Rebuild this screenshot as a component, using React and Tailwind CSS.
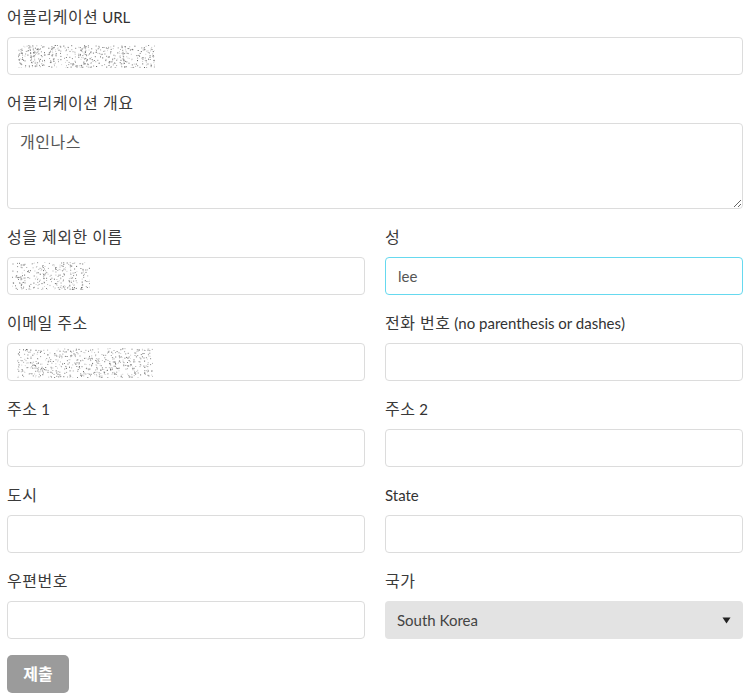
import React from "react";

const FONT = { fontFamily: "Lato, 'Noto Sans CJK KR', sans-serif" };

// seeded noise to stand in for the scrambled (privacy-blurred) values
function Noise({ width, height, count, seed }) {
  let s = seed;
  const rand = () => {
    s = (s * 9301 + 49297) % 233280;
    return s / 233280;
  };
  const dots = [];
  for (let i = 0; i < count; i++) {
    const x = rand() * width;
    const y = rand() * height;
    const g = Math.floor(90 + rand() * 130);
    dots.push(<rect key={i} x={x.toFixed(1)} y={y.toFixed(1)} width="1" height="1" fill={`rgb(${g},${g},${g})`} />);
  }
  return (
    <svg width={width} height={height} className="block">
      {dots}
    </svg>
  );
}

// korean runs render a touch wider/lighter in the reference
function K({ children }) {
  return <span className="text-[16px] tracking-[0.5px] text-[#3a3a3a]">{children}</span>;
}

function Label({ children }) {
  return <label className="block h-5 leading-5 text-[15px] text-[#333] mb-[10px]">{children}</label>;
}

function Field({ label, children }) {
  return (
    <div className="mb-[18px]">
      <Label>{label}</Label>
      {children}
    </div>
  );
}

function TextInput({ value, focused, noise }) {
  return (
    <div className="relative">
      <input
        readOnly
        defaultValue={value}
        className={
          "w-full h-[38px] rounded-[4px] bg-white px-3 text-[15px] text-[#555] outline-none border " +
          (focused ? "border-[#66d9ef]" : "border-[#dcdcdc]")
        }
        style={FONT}
      />
      {noise && <div className="absolute pointer-events-none" style={{ left: noise.x, top: noise.y }}><Noise {...noise} /></div>}
    </div>
  );
}

export default function App() {
  return (
    <div className="bg-white min-h-screen pt-[7px] pl-[7px] pr-[11px]" style={FONT}>
      <Field label={<><K>어플리케이션</K> URL</>}>
        <TextInput noise={{ x: 11, y: 8, width: 137, height: 23, count: 520, seed: 7 }} />
      </Field>
      <Field label={<K>어플리케이션 개요</K>}>
        <textarea
          readOnly
          defaultValue="개인나스"
          className="block w-full h-[86px] rounded-[4px] border border-[#dcdcdc] px-3 pt-[6px] text-[16px] tracking-[0.5px] text-[#555] outline-none"
          style={FONT}
        />
      </Field>
      <div className="grid grid-cols-2 gap-x-5">
        <Field label={<K>성을 제외한 이름</K>}>
          <TextInput noise={{ x: 5, y: 5, width: 78, height: 28, count: 300, seed: 13 }} />
        </Field>
        <Field label={<K>성</K>}>
          <TextInput value="lee" focused />
        </Field>
        <Field label={<K>이메일 주소</K>}>
          <TextInput noise={{ x: 10, y: 5, width: 136, height: 30, count: 560, seed: 29 }} />
        </Field>
        <Field label={<><K>전화 번호</K> (no parenthesis or dashes)</>}>
          <TextInput />
        </Field>
        <Field label={<><K>주소</K> 1</>}>
          <TextInput />
        </Field>
        <Field label={<><K>주소</K> 2</>}>
          <TextInput />
        </Field>
        <Field label={<K>도시</K>}>
          <TextInput />
        </Field>
        <Field label="State">
          <TextInput />
        </Field>
        <div className="mb-4">
          <Label><K>우편번호</K></Label>
          <TextInput />
        </div>
        <div className="mb-4">
          <Label><K>국가</K></Label>
          <div className="relative">
            <select
              defaultValue="South Korea"
              className="w-full h-[38px] appearance-none rounded-[4px] bg-[#e3e3e3] px-3 text-[15px] text-[#444] outline-none"
              style={FONT}
            >
              <option>South Korea</option>
            </select>
            <svg className="absolute right-[12px] top-[16px] pointer-events-none" width="9" height="7" viewBox="0 0 9 7">
              <path d="M0.5 0.5 L8.5 0.5 L4.5 6.5 Z" fill="#222" />
            </svg>
          </div>
        </div>
      </div>
      <button className="h-[38px] w-[62px] rounded-[5px] bg-[#9b9b9b] text-white font-bold text-[16px]" style={FONT}>
        제출
      </button>
    </div>
  );
}
